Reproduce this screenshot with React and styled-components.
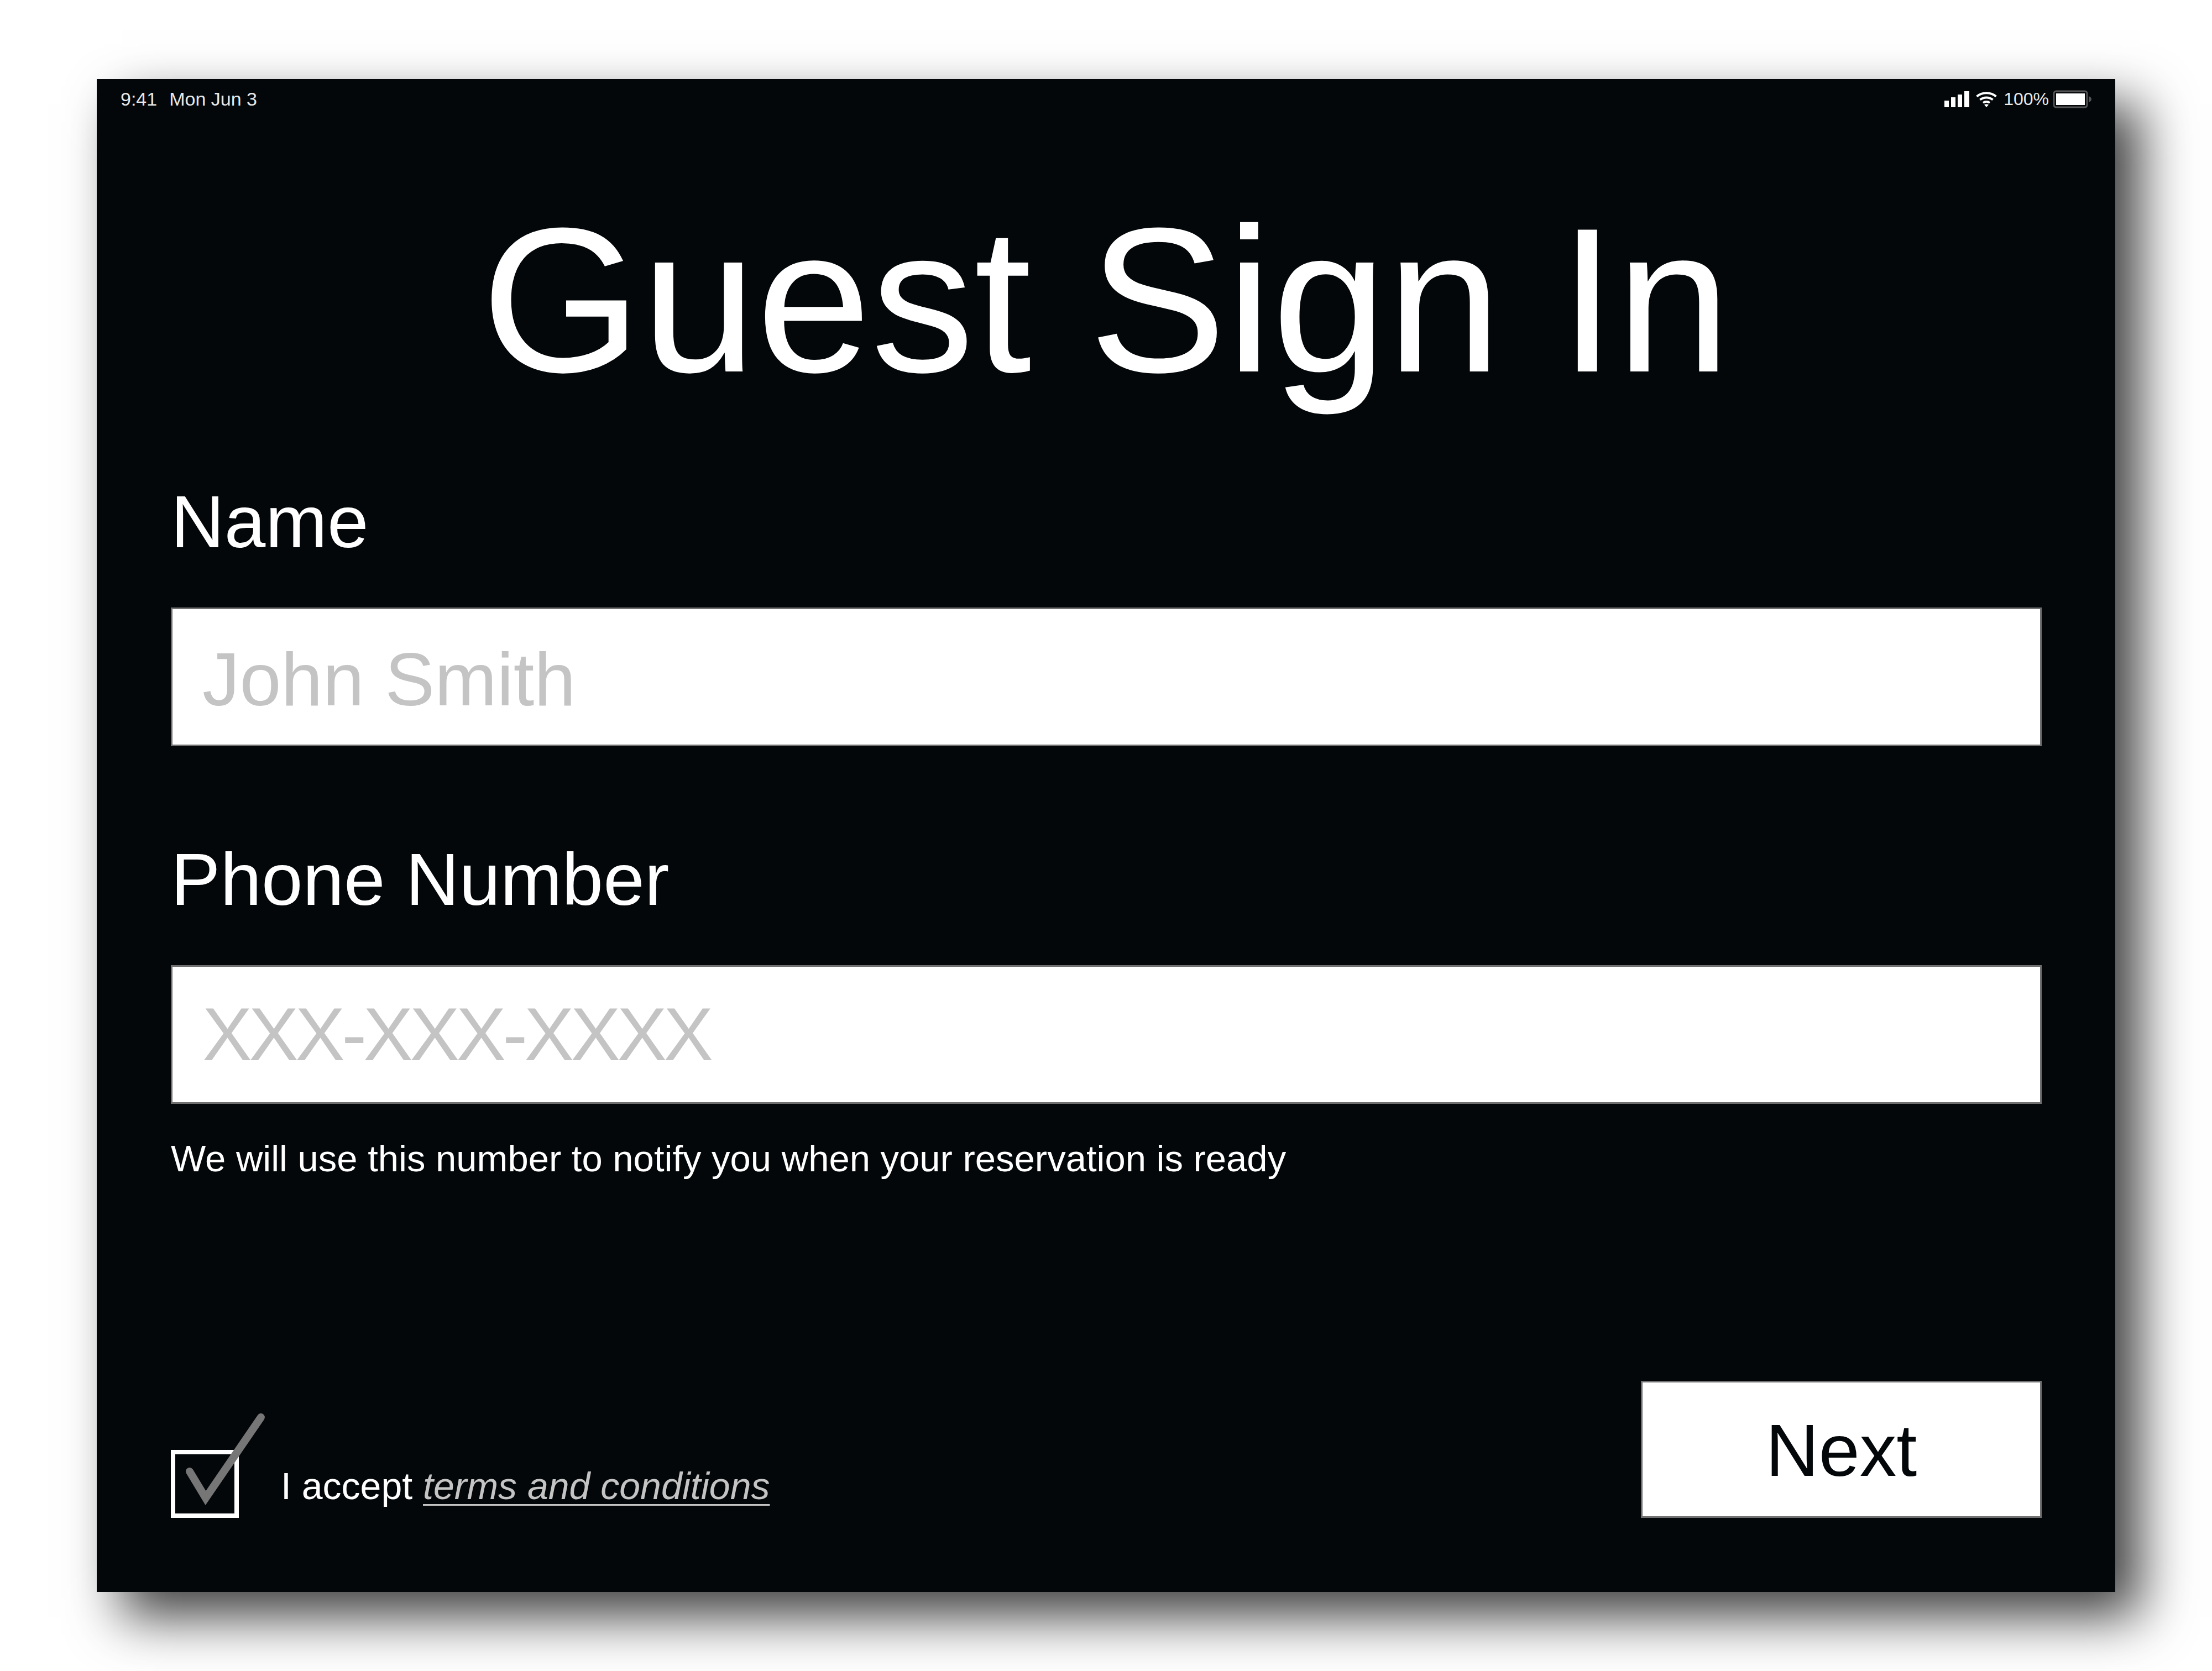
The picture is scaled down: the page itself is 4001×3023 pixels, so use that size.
import React from "react";
import styled, { createGlobalStyle } from "styled-components";

const GlobalStyle = createGlobalStyle`
    html, body {
        margin: 0;
        padding: 0;
        background: #fff;
    }
    body {
        width: 4001px;
        height: 3023px;
        overflow: hidden;
        font-family: "Liberation Sans", Arial, sans-serif;
    }
`;

const Screen = styled.main`
    box-sizing: border-box;
    width: 3651px;
    height: 2737px;
    margin: 143px 0 0 175px;
    background: #030709;
    color: #fff;
    box-shadow: 45px 45px 90px rgba(0, 0, 0, 0.75);
    display: flex;
    flex-direction: column;
`;

const StatusBar = styled.header`
    display: flex;
    justify-content: space-between;
    align-items: center;
    height: 36px;
    padding: 18px 43px 0;
    font-size: 34px;
    color: #e8e8e8;
`;

const StatusGroup = styled.div`
    display: flex;
    align-items: center;
    gap: ${(p) => p.$gap}px;
`;

const Percent = styled.span`
    font-size: 32px;
`;

const Title = styled.h1`
    margin: 146px 0 0;
    font-size: 373px;
    line-height: 400px;
    font-weight: 400;
    text-align: center;
`;

const Form = styled.form`
    flex: 1;
    display: flex;
    flex-direction: column;
    padding: 0 133px 134px 134px;
`;

const Field = styled.div`
    display: flex;
    flex-direction: column;
    margin-top: ${(p) => p.$top}px;
`;

const Label = styled.label`
    font-size: 134px;
    line-height: 150px;
    margin-bottom: 80px;
`;

const Input = styled.input`
    box-sizing: border-box;
    width: 100%;
    height: 251px;
    padding: ${(p) => p.$nudge || 0}px 54px 0;
    border: 3px solid #707070;
    outline: 0;
    background: #fff;
    font-family: inherit;
    font-size: ${(p) => p.$size}px;
    letter-spacing: ${(p) => p.$spacing || 0}px;
    &::placeholder {
        color: #c4c4c4;
        opacity: 1;
    }
`;

const Hint = styled.p`
    margin: 59px 0 0;
    font-size: 67px;
    line-height: 80px;
`;

const Footer = styled.div`
    margin-top: auto;
    display: flex;
    justify-content: space-between;
    align-items: flex-end;
`;

const Accept = styled.div`
    display: flex;
    align-items: flex-end;
    gap: 76px;
`;

const CheckBox = styled.span`
    position: relative;
    box-sizing: border-box;
    display: block;
    width: 123px;
    height: 123px;
    border: 8px solid #fff;
`;

const Tick = styled.svg`
    position: absolute;
    left: 19px;
    top: -71px;
    overflow: visible;
`;

const AcceptText = styled.span`
    font-size: 68px;
    line-height: 80px;
    margin-bottom: 18px;
`;

const TermsLink = styled.a`
    color: #c4c4c4;
    font-style: italic;
    text-decoration: underline;
    text-decoration-thickness: 3px;
    text-underline-offset: 9px;
`;

const NextButton = styled.button`
    box-sizing: border-box;
    width: 725px;
    height: 248px;
    border: 3px solid #707070;
    background: #fff;
    color: #030709;
    font-family: inherit;
    font-size: 133px;
    padding: 4px 0 0;
`;

const Battery = styled.svg`
    margin-left: -5px;
`;

const SignalIcon = () => (
    <svg width="45" height="29" viewBox="0 0 45 29" fill="#fff">
        <rect x="0" y="17" width="8" height="12" />
        <rect x="12" y="11" width="8" height="18" />
        <rect x="24" y="6" width="8" height="23" />
        <rect x="36" y="0" width="9" height="29" />
    </svg>
);

const WifiIcon = () => (
    <svg width="38" height="29" viewBox="0 0 38 29" fill="none" stroke="#fff" strokeWidth="4">
        <path d="M1.5 9.5C11 1 27 1 36.5 9.5" />
        <path d="M7.5 15.5C14 10 24 10 30.5 15.5" />
        <path d="M13 21C16.5 18.3 21.5 18.3 25 21" />
        <path d="M19 29L15 24.5C17 23 21 23 23 24.5Z" fill="#fff" stroke="none" />
    </svg>
);

const BatteryIcon = () => (
    <Battery width="70" height="33" viewBox="0 0 70 33">
        <rect x="2" y="2" width="60" height="29" rx="4" fill="none" stroke="#555" strokeWidth="3" />
        <rect x="6" y="6" width="52" height="21" fill="#fff" />
        <path d="M65 11C68 12 70 14 70 16.5C70 19 68 21 65 22Z" fill="#555" />
    </Battery>
);

export default function App() {
    return (
        <>
            <GlobalStyle />
            <Screen>
                <StatusBar>
                    <StatusGroup $gap={22}>
                        <span>9:41</span>
                        <span>Mon Jun 3</span>
                    </StatusGroup>
                    <StatusGroup $gap={12}>
                        <SignalIcon />
                        <WifiIcon />
                        <Percent>100%</Percent>
                        <BatteryIcon />
                    </StatusGroup>
                </StatusBar>
                <Title>Guest Sign In</Title>
                <Form>
                    <Field $top={126}>
                        <Label>Name</Label>
                        <Input $size={135} $nudge={10} placeholder="John Smith" />
                    </Field>
                    <Field $top={166}>
                        <Label>Phone Number</Label>
                        <Input $size={135} $spacing={-6} placeholder="XXX-XXX-XXXX" />
                        <Hint>We will use this number to notify you when your reservation is ready</Hint>
                    </Field>
                    <Footer>
                        <Accept>
                            <CheckBox>
                                <Tick width="137" height="157" viewBox="0 0 137 157">
                                    <path
                                        d="M7 102L36 150L136 4"
                                        fill="none"
                                        stroke="#767676"
                                        strokeWidth="14"
                                        strokeLinecap="round"
                                        strokeLinejoin="miter"
                                    />
                                </Tick>
                            </CheckBox>
                            <AcceptText>
                                I accept <TermsLink>terms and conditions</TermsLink>
                            </AcceptText>
                        </Accept>
                        <NextButton type="button">Next</NextButton>
                    </Footer>
                </Form>
            </Screen>
        </>
    );
}
